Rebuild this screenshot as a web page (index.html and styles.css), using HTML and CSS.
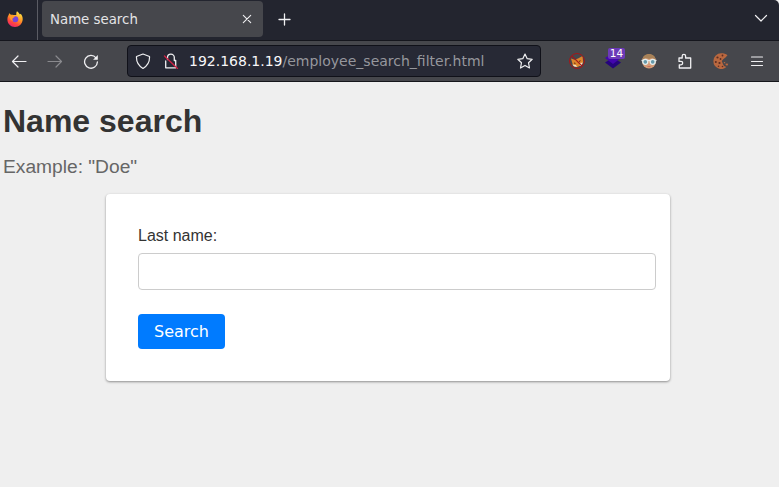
FILE: index.html
```html
<!DOCTYPE html>
<html lang="en">
<head>
<meta charset="utf-8">
<title>Name search</title>
<link rel="stylesheet" href="styles.css">
</head>
<body>
<header class="tabbar">
  <div class="brand">
    <svg width="16" height="16" viewBox="0 0 16 16">
      <defs>
        <linearGradient id="flame" x1=".8" y1="0" x2=".3" y2="1"><stop offset="0" stop-color="#fff04a"/><stop offset=".45" stop-color="#ff9a25"/><stop offset=".75" stop-color="#ff473d"/><stop offset="1" stop-color="#ed2372"/></linearGradient>
      </defs>
      <path d="M10 .2C12 1.5 12.4 3 13 3.5l.5-.8C15 4 15.8 6 15.7 8.5 15.4 13 12 16 8 16 3.700 16 .4 12.800 .4 8.500 .4 6.200 1.200 4.500 1.800 3.800L2 2.300c.7.2 1.400 1 1.800 1.500C4.800 3.500 5.500 3.700 6.300 4L9.300 4C9.200 2.500 9.300 1 10 .2Z" fill="url(#flame)"/>
      <circle cx="8.300" cy="8.300" r="3" fill="#7645d8"/>
      <path d="M2.500 4.500C4 3.500 6.500 4 7.800 5.700L6.500 6.800C4.800 7 5 9 6 10 3.500 9.500 2.500 7 2.500 4.500Z" fill="#ff9b25"/>
    </svg>
  </div>
  <div class="tab">
    <span class="tab-title">Name search</span>
    <svg class="line" width="10" height="10" viewBox="0 0 10 10"><path d="M1.300 1.300l7.400 7.400M8.700 1.300L1.300 8.700"/></svg>
  </div>
  <svg class="line new-tab" width="14" height="14" viewBox="0 0 14 14"><path d="M6.500 1v11M1 6.500h11" stroke-width="1.300"/></svg>
  <svg class="line all-tabs" width="14" height="14" viewBox="0 0 14 14"><path d="M1.500 4.500L7 10l5.500-5.500" stroke-width="1.200"/></svg>
</header>
<nav class="toolbar">
  <div class="tool"><svg class="line" width="16" height="16" viewBox="0 0 16 16"><path d="M15 8.500H1.500M7 3L1.500 8.500 7 14" stroke-width="1.200"/></svg></div>
  <div class="tool dim"><svg class="line" width="16" height="16" viewBox="0 0 16 16"><path d="M1 8.500h13.500M9 3L14.500 8.500 9 14" stroke-width="1.200"/></svg></div>
  <div class="tool"><svg class="line" width="16" height="16" viewBox="0 0 16 16"><path d="M13 4.800A6.400 6.400 0 1 0 14.400 9" stroke-width="1.300"/><path d="M14.800 2v4.700H10.100Z" fill="#f4f4f6" stroke="none"/></svg></div>
  <div class="urlbar">
    <svg class="line" width="16" height="16" viewBox="0 0 16 16"><path d="M8 1L14.500 3.500C14.800 8 13 12.500 8 15.500 3 12.500 1.200 8 1.500 3.500Z" stroke-width="1.200"/></svg>
    <svg class="line lock" width="16" height="16" viewBox="0 0 16 16"><path d="M4.500 6.500V4.500a3.300 3.300 0 0 1 6.800 0v3h1.400v7.300H2.700V8" stroke-width="1.300"/><path class="slash" d="M1.500 3L14.500 15.500"/></svg>
    <div class="url"><span class="host">192.168.1.19</span>/employee_search_filter.html</div>
    <svg class="line star" width="16" height="16" viewBox="0 0 16 16"><path d="M8 1l2.200 4.700 5 .6-3.700 3.400 1 5.300L8 12.400l-4.500 2.600 1-5.300L.8 6.300l5-.6Z" stroke-width="1.200"/></svg>
  </div>
  <div class="extensions">
    <div class="tool">
      <svg width="18" height="18" viewBox="0 0 18 18"><path d="M3 6.500l3.500 1.300L10 6.500 14.500 4l.7 6-1.700 3L9 15.200 5 13.500Z" fill="#dd852b"/><path d="M4.500 12.500L8 13l1 2-3-.5ZM12 11l2.800-.5-1 2.500-2 1Z" fill="#f5dfc2"/><path d="M6 11l1.500.4M11 9.500l1.500-.8" stroke="#5c2715"/><circle cx="9" cy="9" r="7.500" fill="none" stroke="#a51518"/><path d="M3.800 3.800l10.400 10.400" stroke="#a51518" stroke-width="1.200"/></svg>
    </div>
    <div class="tool badged">
      <svg width="16" height="16" viewBox="0 0 16 16"><path d="M0 9.500L4 7l4 3 4-3 4 2.500L8 15.500Z" fill="#25047c"/><path d="M0 5l8-5 8 5-8 6Z" fill="#4305ae"/></svg>
      <span class="badge">14</span>
    </div>
    <div class="tool">
      <svg width="16" height="16" viewBox="0 0 16 16"><ellipse cx="8" cy="8.500" rx="7" ry="7" fill="#d49b76"/><path d="M1.300 6.500C2 2.500 5 1 8 1s6 1.500 6.700 5.500L11 5 8 6 5 5Z" fill="#a88258"/><path d="M.5 7.500h15" stroke="#e4eded" stroke-width="1.300"/><circle cx="4.300" cy="8.800" r="2.500" fill="#6599aa" stroke="#e4eded" stroke-width="1.300"/><circle cx="11.700" cy="8.800" r="2.500" fill="#6599aa" stroke="#e4eded" stroke-width="1.300"/><path d="M6.500 13.500h3" stroke="#c66f5f"/></svg>
    </div>
    <div class="tool"><svg class="line" width="16" height="16" viewBox="0 0 16 16"><path d="M5.200 5V3a1.700 1.700 0 0 1 3.400 0v2h5.100v10H2.300V11.800H4a1.700 1.700 0 0 0 0-3.400H2V5Z" stroke-width="1.300"/></svg></div>
    <div class="tool">
      <svg width="16" height="16" viewBox="0 0 16 16"><path d="M14.500 2.300C12.800.8 10.500.3 8.500.3A7.800 7.800 0 0 0 .4 8.300a7.800 7.800 0 0 0 13 5.700L11 13 9.500 10 8.800 8 10.500 6l2-1.500Z" fill="#b9683f"/><g fill="#5c2d23"><circle cx="4.500" cy="4.500" r="1.100"/><circle cx="9.500" cy="2.500" r=".9"/><circle cx="7.500" cy="6" r=".9"/><circle cx="2.800" cy="9" r="1"/><circle cx="6.500" cy="10" r="1.100"/><circle cx="5.500" cy="13.300" r=".8"/><circle cx="9.500" cy="13.500" r=".8"/></g><path d="M10.500 9.300l1.800-.5-.3 2ZM12.800 10.500l2.500.3-1 2-1.800-.8Z" fill="#b9683f"/></svg>
    </div>
    <div class="tool"><svg class="line" width="16" height="16" viewBox="0 0 16 16"><path d="M2.500 4h11M2.500 8.500h11M2.500 12.500h11" stroke-width="1.200"/></svg></div>
  </div>
</nav>
<main class="page">
  <h1>Name search</h1>
  <p class="example">Example: "Doe"</p>
  <form class="card">
    <label for="last">Last name:</label>
    <input id="last" type="text">
    <button type="button">Search</button>
  </form>
</main>
</body>
</html>
```

FILE: styles.css
```css
* { box-sizing: border-box; }
body {
  margin: 0;
  height: 487px;
  overflow: hidden;
  background: #efefef;
  color: #333;
  font-family: "Liberation Sans", Arial, sans-serif;
}
svg { display: block; flex: none; }
.line {
  fill: none;
  stroke: #f0f0f2;
  stroke-width: 1.1;
  stroke-linecap: round;
  stroke-linejoin: round;
}
.tabbar {
  display: flex;
  height: 41px;
  background: #23252f;
  border-bottom: 1px solid #15161d;
  border-top-right-radius: 5px;
  font-family: "DejaVu Sans", sans-serif;
}
.brand {
  width: 38px;
  padding: 11px 0 0 7px;
  border-right: 1px solid #5b5c64;
}
.tab {
  display: flex;
  align-items: center;
  justify-content: space-between;
  width: 221px;
  height: 36px;
  margin: 1px 0 0 4px;
  padding: 0 11px 0 8px;
  border-radius: 4px;
  background: #46474c;
}
.tab-title { font-size: 13.33px; color: #e4e4e6; }
.new-tab { margin: 13px 0 0 15px; }
.all-tabs { margin: 11px 11px 0 auto; }
.toolbar {
  display: flex;
  align-items: center;
  height: 41px;
  padding: 0 4px 0 1px;
  background: #46474c;
  border-bottom: 1px solid #15161b;
  font-family: "DejaVu Sans", sans-serif;
}
.tool {
  position: relative;
  display: flex;
  align-items: center;
  justify-content: center;
  flex: none;
  width: 36px;
  height: 36px;
}
.dim { opacity: .4; }
.urlbar {
  display: flex;
  align-items: center;
  width: 414px;
  height: 32px;
  margin-left: 18px;
  padding: 0 7px;
  border: 1px solid #101119;
  border-radius: 4px;
  background: #272935;
}
.lock { margin-left: 12px; }
.slash { stroke: #d32045; stroke-width: 1.3; }
.url { margin-left: 10px; font-size: 14px; color: #96979d; white-space: nowrap; }
.host { color: #f7f7f9; }
.star { margin-left: auto; }
.extensions { display: flex; margin-left: auto; }
.badge {
  position: absolute;
  left: 13px;
  top: 5px;
  width: 17px;
  height: 11px;
  border-radius: 2px;
  background: #6c3ab8;
  color: #fff;
  font-size: 10.5px;
  line-height: 11px;
  text-align: center;
}
.page { padding: 21px 3px 0; }
h1 { margin: 0; font-size: 32px; line-height: 37px; }
.example { margin: 16px 0; font-size: 19.2px; line-height: 22px; color: #666; }
.card {
  display: flex;
  flex-direction: column;
  align-items: flex-start;
  width: 564px;
  height: 187px;
  margin-left: 103px;
  padding: 32px 14px 32px 32px;
  border-radius: 4px;
  background: #fff;
  box-shadow: 0 1px 3px rgba(0, 0, 0, .24), 0 1px 2px rgba(0, 0, 0, .2);
}
label { font-size: 16px; line-height: 19px; }
input {
  width: 518px;
  height: 37px;
  margin: 8px 0 24px;
  padding: 8px;
  border: 1px solid #ccc;
  border-radius: 4px;
  background: #fff;
}
button {
  width: 87px;
  height: 35px;
  padding: 0;
  border: 0;
  border-radius: 4px;
  background: #007bff;
  color: #fff;
  font: 16px "DejaVu Sans", sans-serif;
}
```
